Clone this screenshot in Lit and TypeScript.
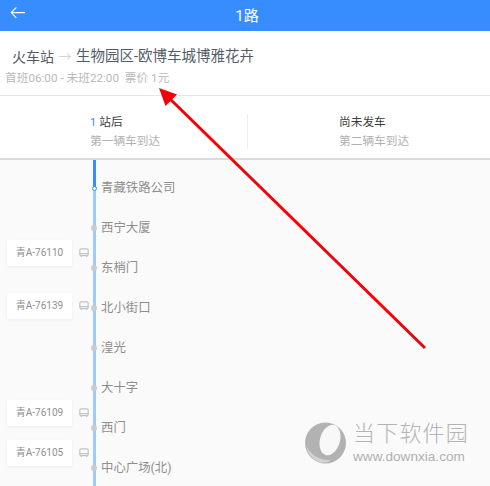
import { LitElement, html, css, svg } from "lit";
import { customElement } from "lit/decorators.js";

interface Stop { name: string; bus?: string; close?: boolean; }
const stops: Stop[] = [
  { name: "青藏铁路公司" },
  { name: "西宁大厦" },
  { name: "东梢门", bus: "青A-76110" },
  { name: "北小街口", bus: "青A-76139", close: true },
  { name: "湟光" },
  { name: "大十字" },
  { name: "西门", bus: "青A-76109" },
  { name: "中心广场(北)", bus: "青A-76105" },
];

const busIcon = svg`<svg class="bus-icon" viewBox="0 0 10 10" width="10" height="10" fill="none" stroke="#c0c2c4" stroke-width="1.2">
  <rect x="0.8" y="0.8" width="8.4" height="6.8" rx="1.4"/>
  <path d="M1 5.6h8M2.2 7.6v1.4M7.8 7.6v1.4" />
</svg>`;

@customElement("app-root")
export class AppRoot extends LitElement {
  static styles = css`
    :host {
      display: block;
      width: 490px;
      height: 486px;
      overflow: hidden;
      position: relative;
      background: #fafafa;
      font-family: Roboto, "Noto Sans CJK SC", sans-serif;
    }
    .bar {
      height: 31px;
      background: #378dfd;
      color: #fff;
      display: flex;
      align-items: center;
      justify-content: center;
      position: relative;
      font-size: 15px;
      box-sizing: border-box;
    }
    .back {
      position: absolute;
      left: 10px;
      top: 6px;
    }
    .bar .title { margin-left: 4px; margin-top: -3px; }
    .info {
      height: 64px;
      background: #fff;
      border-bottom: 1px solid #e6e6e6;
      padding-left: 5px;
      display: flex;
      flex-direction: column;
    }
    .route {
      margin: 16px 0 0 7px;
      height: 20px;
      line-height: 20px;
      font-size: 14px;
      color: #535c66;
      display: flex;
      align-items: center;
      white-space: nowrap;
    }
    .route .to {
      font-size: 13px;
      color: #d4d6d8;
      width: 22px;
      text-align: center;
      flex: none;
    }
    .route .end { font-size: 14.5px; }
    .times {
      margin-top: 4px;
      font-size: 11.7px;
      line-height: 14px;
      color: #bababa;
      white-space: nowrap;
    }
    .tabs {
      height: 64px;
      background: #fff;
      border-bottom: 2px solid #dcdcdc;
      box-sizing: border-box;
      display: grid;
      grid-template-columns: 248px 1fr;
      align-items: center;
    }
    .tab {
      height: 35px;
      margin-top: 9px;
      display: flex;
      flex-direction: column;
      justify-content: space-between;
      font-size: 11.7px;
      line-height: 16px;
      white-space: nowrap;
    }
    .tab.first { padding-left: 90px; border-right: 1px solid #eeeeee; box-sizing: border-box; }
    .tab.second { padding-left: 91px; }
    .tab .head { color: #3c3c3c; }
    .tab .num { color: #378dfd; margin-right: 3px; font-size: 11px; }
    .tab .sub { color: #b0b0b0; }
    .line {
      position: relative;
      padding-top: 8px;
    }
    .track {
      position: absolute;
      left: 93px;
      top: 0;
      bottom: -60px;
      width: 3px;
      background: #9ccbff;
    }
    .track-on {
      position: absolute;
      left: 93px;
      top: 0;
      height: 28px;
      width: 3px;
      background: #378dfd;
    }
    .row {
      height: 40px;
      display: grid;
      grid-template-columns: 101px 1fr;
      position: relative;
    }
    .slot {
      display: flex;
      align-items: flex-start;
      padding-left: 7px;
      gap: 7px;
      margin-top: -8px;
    }
    .slot.close { margin-top: 5px; }
    .card {
      width: 65px;
      height: 26px;
      background: #fff;
      box-shadow: 0 1px 3px rgba(0, 0, 0, 0.06);
      font-size: 10px;
      line-height: 26px;
      color: #8f8f8f;
      text-align: center;
      white-space: nowrap;
      border-radius: 1px;
    }
    .bus-icon { margin-top: 8px; flex: none; }
    .name {
      font-size: 12.4px;
      line-height: 40px;
      color: #8e8e8e;
      white-space: nowrap;
    }
    .dot {
      position: absolute;
      left: 91px;
      top: 17px;
      width: 6px;
      height: 6px;
      border-radius: 50%;
      background: #cccccc;
    }
    .dot.now {
      left: 91.5px;
      top: 17.5px;
      width: 5px;
      height: 5px;
      box-sizing: border-box;
      background: #fff;
      border: 1px solid #378dfd;
    }
    .arrow { position: absolute; left: 0; top: 0; pointer-events: none; }
    .mark {
      position: absolute;
      left: 305px;
      top: 420px;
      display: flex;
      gap: 6px;
      pointer-events: none;
    }
    .mark-text { display: flex; flex-direction: column; }
    .cn {
      font-size: 22px;
      line-height: 24px;
      letter-spacing: 1.2px;
      font-weight: 300;
      color: #b4b4b4;
      white-space: nowrap;
      margin-top: 2px;
    }
    .en {
      font-family: "Liberation Sans", sans-serif;
      font-size: 13.6px;
      line-height: 14px;
      margin-top: 4px;
      white-space: nowrap;
      color: #b0b0b0;
    }
  `;

  render() {
    return html`
      <div class="bar">
        <svg class="back" width="16" height="14" viewBox="0 0 16 14" fill="none" stroke="#fff" stroke-width="1.1">
          <path d="M15 6.6H1.2M6.4 1.4 1.2 6.6l5.2 5.2" />
        </svg>
        <span class="title">1路</span>
      </div>
      <div class="info">
        <div class="route">
          <span>火车站</span><span class="to">→</span><span class="end">生物园区-欧博车城博雅花卉</span>
        </div>
        <div class="times">首班06:00 - 未班22:00&nbsp;&nbsp;票价 1元</div>
      </div>
      <div class="tabs">
        <div class="tab first">
          <div class="head"><span class="num">1</span>站后</div>
          <div class="sub">第一辆车到达</div>
        </div>
        <div class="tab second">
          <div class="head">尚未发车</div>
          <div class="sub">第二辆车到达</div>
        </div>
      </div>
      <div class="line">
        <div class="track"></div>
        <div class="track-on"></div>
        ${stops.map(
          (s, i) => html`
            <div class="row">
              <div class="slot ${s.close ? "close" : ""}">
                ${s.bus ? html`<div class="card">${s.bus}</div>${busIcon}` : ""}
              </div>
              <div class="name">${s.name}</div>
              <div class="dot ${i === 0 ? "now" : ""}"></div>
            </div>
          `
        )}
      </div>
      <svg class="arrow" width="490" height="486" viewBox="0 0 490 486" fill="none">
        <path d="M425 348 166 95" stroke="#f60008" stroke-width="3" />
        <path d="M159 88 177 94.5 165.5 106Z" fill="#f60008" />
      </svg>
      <div class="mark">
        <svg width="42" height="45" viewBox="0 0 42 45">
          <circle cx="20.5" cy="23" r="20.5" fill="#b2b2b2" />
          <ellipse cx="25" cy="20" rx="10" ry="15.5" transform="rotate(16 25 20)" fill="#f8f8f8" />
          <path d="M1 26C6 35 15 41 26 40 20 45 6 44 1 26Z" fill="#d4d4d4" />
        </svg>
        <div class="mark-text">
          <div class="cn">当下软件园</div>
          <div class="en">www.downxia.com</div>
        </div>
      </div>
    `;
  }
}
